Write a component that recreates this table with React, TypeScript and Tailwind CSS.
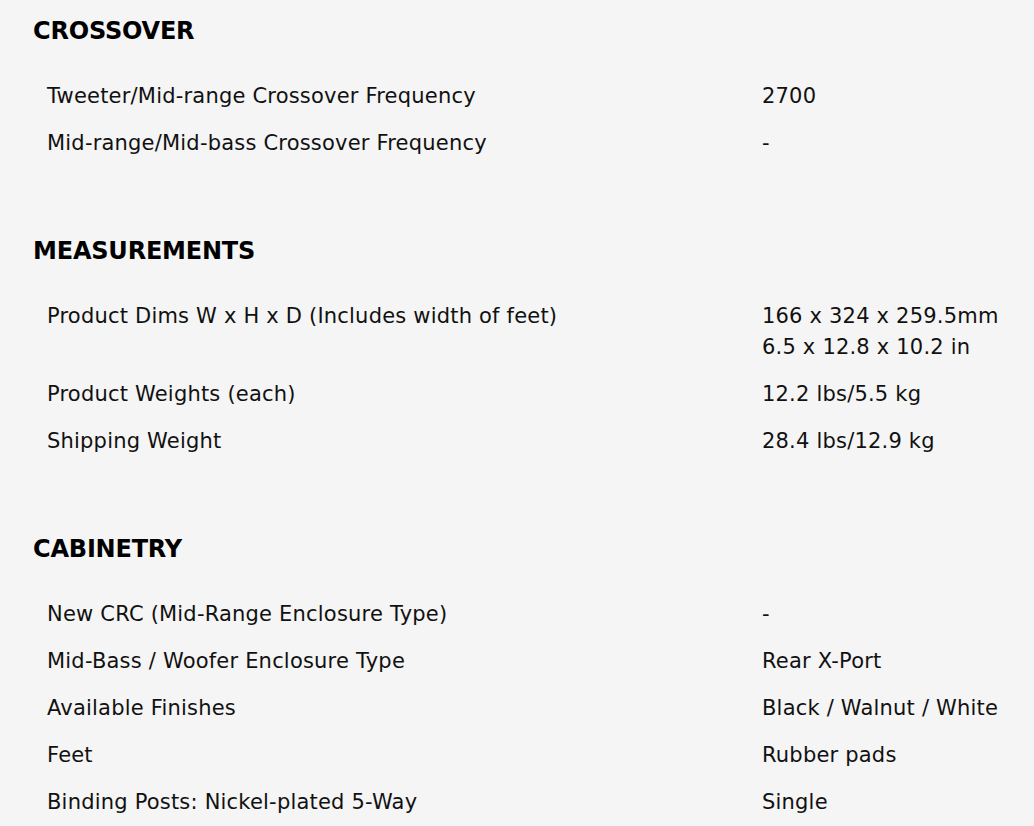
import React from 'react';

interface Spec {
  label: string;
  value: string[];
}

interface Section {
  title: string;
  specs: Spec[];
}

const sections: Section[] = [
  {
    title: 'CROSSOVER',
    specs: [
      { label: 'Tweeter/Mid-range Crossover Frequency', value: ['2700'] },
      { label: 'Mid-range/Mid-bass Crossover Frequency', value: ['-'] },
    ],
  },
  {
    title: 'MEASUREMENTS',
    specs: [
      { label: 'Product Dims W x H x D (Includes width of feet)', value: ['166 x 324 x 259.5mm', '6.5 x 12.8 x 10.2 in'] },
      { label: 'Product Weights (each)', value: ['12.2 lbs/5.5 kg'] },
      { label: 'Shipping Weight', value: ['28.4 lbs/12.9 kg'] },
    ],
  },
  {
    title: 'CABINETRY',
    specs: [
      { label: 'New CRC (Mid-Range Enclosure Type)', value: ['-'] },
      { label: 'Mid-Bass / Woofer Enclosure Type', value: ['Rear X-Port'] },
      { label: 'Available Finishes', value: ['Black / Walnut / White'] },
      { label: 'Feet', value: ['Rubber pads'] },
      { label: 'Binding Posts: Nickel-plated 5-Way', value: ['Single'] },
    ],
  },
];

export default function App() {
  return (
    <div
      className="min-h-[826px] bg-[#f5f5f5] text-[#111111] px-[33px] pt-[15px] flex flex-col gap-[68px]"
      style={{ fontFamily: '"DejaVu Sans", "Liberation Sans", sans-serif' }}
    >
      {sections.map((section) => (
        <section key={section.title} className="flex flex-col gap-[26px]">
          <h2 className="text-[24px] leading-[32px] font-bold tracking-[-0.2px] text-black">{section.title}</h2>
          <div className="flex flex-col">
            {section.specs.map((spec) => (
              <div key={spec.label} className="flex py-2 text-[21px] leading-[31px] tracking-[0.2px]">
                <div className="w-[729px] pl-[14px]">{spec.label}</div>
                <div className="flex-1">
                  {spec.value.map((v) => (
                    <div key={v}>{v}</div>
                  ))}
                </div>
              </div>
            ))}
          </div>
        </section>
      ))}
    </div>
  );
}
